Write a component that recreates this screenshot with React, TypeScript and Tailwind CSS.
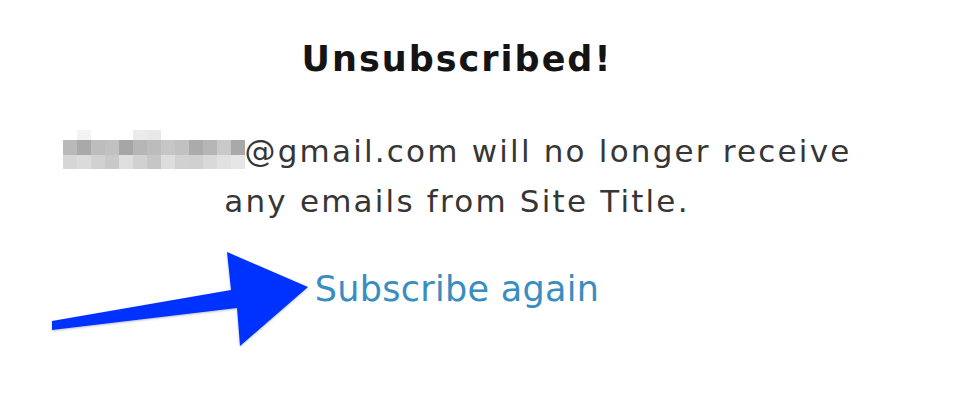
import React from "react";

const row0 = ["#ffffff","#f3f3f3","#ffffff","#ffffff","#ffffff","#ebebeb","#e8e8e8","#ffffff","#ffffff","#ffffff","#ffffff","#ffffff","#ffffff"];
const row1 = ["#b9b9b9","#a9a9a9","#bdbdbd","#c1c1c1","#a6a6a6","#b6b6b6","#bcbcbc","#c6c6c6","#c1c1c1","#ababab","#b6b6b6","#c9c9c9","#a9a9a9"];
const row2 = ["#d6d6d6","#dbdbdb","#d1d1d1","#c9c9c9","#dedede","#d1d1d1","#c6c6c6","#dddddd","#d1d1d1","#d0d0d0","#d9d9d9","#e1e1e1","#e6e6e6"];

function Blur() {
  return (
    <span className="flex flex-col mt-[4px]">
      {[row0, row1, row2].map((r, i) => (
        <span key={i} className="flex">
          {r.map((c, j) => (
            <span
              key={j}
              className={i === 0 ? "w-[14px] h-[10px]" : i === 1 ? "w-[14px] h-[15px]" : "w-[14px] h-[14px]"}
              style={{ backgroundColor: c }}
            />
          ))}
        </span>
      ))}
    </span>
  );
}

export default function App() {
  return (
    <div className="relative w-[960px] h-[400px] bg-white overflow-hidden" style={{ fontFamily: "'DejaVu Sans', sans-serif" }}>
      <div className="w-[914px] flex flex-col items-center pt-[36px]">
        <h1 className="text-[35px] leading-[46px] font-bold tracking-[2px] text-[#141414]">Unsubscribed!</h1>
        <div className="mt-[44px] flex items-start text-[31px] leading-[50px] tracking-[2.2px] text-[#363636]">
          <Blur />
          <span>@gmail.com will no longer receive</span>
        </div>
        <div className="text-[31px] leading-[50px] tracking-[2.2px] text-[#363636]">any emails from Site Title.</div>
        <a className="mt-[40px] text-[35px] leading-[46px] tracking-[0.3px] text-[#3a8dbf]">Subscribe again</a>
      </div>
      <svg className="absolute left-0 top-0" width="960" height="400" viewBox="0 0 960 400">
        <defs>
          <filter id="sh" x="-10%" y="-10%" width="130%" height="130%">
            <feDropShadow dx="0" dy="1" stdDeviation="1.2" floodColor="#000" floodOpacity="0.25" />
          </filter>
        </defs>
        <polygon
          points="52,321 231,290 227,252 308,287 240,346 237,308 52,330"
          fill="#0433ff"
          filter="url(#sh)"
        />
      </svg>
    </div>
  );
}
